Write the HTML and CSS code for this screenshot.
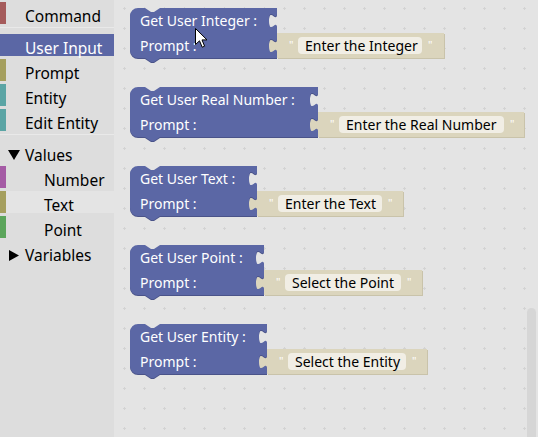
FILE: index.html
```html
<!DOCTYPE html>
<html>
<head>
<meta charset="utf-8">
<link rel="stylesheet" href="styles.css">
</head>
<body>
<div class="app">
  <div class="toolbox">
    <div class="row"><span class="bar c-command"></span><span class="label">Command</span></div>
    <div class="sep"></div>
    <div class="row selected"><span class="bar c-input"></span><span class="label">User Input</span></div>
    <div class="row"><span class="bar c-prompt"></span><span class="label">Prompt</span></div>
    <div class="row"><span class="bar c-entity"></span><span class="label">Entity</span></div>
    <div class="row"><span class="bar c-entity"></span><span class="label">Edit Entity</span></div>
    <div class="sep"></div>
    <div class="row"><svg class="tri" width="12" height="10" viewBox="0 0 12 10"><polygon points="0,0 12,0 6,10" fill="#000"/></svg><span class="label nested">Values</span></div>
    <div class="row sub"><span class="bar c-number"></span><span class="label">Number</span></div>
    <div class="row sub hover"><span class="bar c-text"></span><span class="label">Text</span></div>
    <div class="row sub"><span class="bar c-point"></span><span class="label">Point</span></div>
    <div class="row"><svg class="tri" width="12" height="11" viewBox="0 0 12 11"><polygon points="1,0 11,5.5 1,11" fill="#000"/></svg><span class="label nested">Variables</span></div>
  </div>
  <div class="workspace">
    <svg class="canvas" width="424" height="437" viewBox="0 0 424 437">
      <defs>
        <pattern id="grid" width="20" height="20" patternUnits="userSpaceOnUse">
          <rect x="9" y="8" width="3" height="1" fill="#d3d3d3"/>
          <rect x="10" y="7" width="1" height="3" fill="#d3d3d3"/>
        </pattern>
      </defs>
      <rect width="424" height="437" fill="url(#grid)"/>

      <!-- Block 1 -->
      <g transform="translate(16,8)">
        <g transform="translate(147,25)">
          <path class="str-dark" transform="translate(1,1)" d="M0,0 H167 V25 H0 V20 c0,-10 -8,8 -8,-7.5 s8,2.5 8,-7.5 Z"/>
          <path class="str" d="M0,0 H167 V25 H0 V20 c0,-10 -8,8 -8,-7.5 s8,2.5 8,-7.5 Z"/>
          <text class="quote" x="12" y="16">"</text>
          <rect class="field" x="21" y="4" width="124" height="17" rx="4"/>
          <text class="ftext" x="28" y="18">Enter the Integer</text>
          <text class="quote" x="151" y="16">"</text>
        </g>
        <path class="blk-dark" transform="translate(0,1)" d="M0,8 A8,8 0 0 1 8,0 H15 l6,4 3,0 6,-4 H147 v5 c0,10 -8,-8 -8,7.5 s8,-2.5 8,7.5 V30 c0,10 -8,-8 -8,7.5 s8,-2.5 8,7.5 V50 H30 l-6,4 -3,0 -6,-4 H8 A8,8 0 0 1 0,42 Z"/>
        <path class="blk" d="M0,8 A8,8 0 0 1 8,0 H15 l6,4 3,0 6,-4 H147 v5 c0,10 -8,-8 -8,7.5 s8,-2.5 8,7.5 V30 c0,10 -8,-8 -8,7.5 s8,-2.5 8,7.5 V50 H30 l-6,4 -3,0 -6,-4 H8 A8,8 0 0 1 0,42 Z"/>
        <text class="btext" x="10" y="18">Get User Integer :</text>
        <text class="btext" x="10" y="43">Prompt :</text>
      </g>

      <!-- Block 2 -->
      <g transform="translate(16,87)">
        <g transform="translate(188,25)">
          <path class="str-dark" transform="translate(1,1)" d="M0,0 H206 V25 H0 V20 c0,-10 -8,8 -8,-7.5 s8,2.5 8,-7.5 Z"/>
          <path class="str" d="M0,0 H206 V25 H0 V20 c0,-10 -8,8 -8,-7.5 s8,2.5 8,-7.5 Z"/>
          <text class="quote" x="12" y="16">"</text>
          <rect class="field" x="21" y="4" width="165" height="17" rx="4"/>
          <text class="ftext" x="28" y="18">Enter the Real Number</text>
          <text class="quote" x="192" y="16">"</text>
        </g>
        <path class="blk-dark" transform="translate(0,1)" d="M0,8 A8,8 0 0 1 8,0 H15 l6,4 3,0 6,-4 H188 v5 c0,10 -8,-8 -8,7.5 s8,-2.5 8,7.5 V30 c0,10 -8,-8 -8,7.5 s8,-2.5 8,7.5 V50 H30 l-6,4 -3,0 -6,-4 H8 A8,8 0 0 1 0,42 Z"/>
        <path class="blk" d="M0,8 A8,8 0 0 1 8,0 H15 l6,4 3,0 6,-4 H188 v5 c0,10 -8,-8 -8,7.5 s8,-2.5 8,7.5 V30 c0,10 -8,-8 -8,7.5 s8,-2.5 8,7.5 V50 H30 l-6,4 -3,0 -6,-4 H8 A8,8 0 0 1 0,42 Z"/>
        <text class="btext" x="10" y="18">Get User Real Number :</text>
        <text class="btext" x="10" y="43">Prompt :</text>
      </g>

      <!-- Block 3 -->
      <g transform="translate(16,166)">
        <g transform="translate(127,25)">
          <path class="str-dark" transform="translate(1,1)" d="M0,0 H146 V25 H0 V20 c0,-10 -8,8 -8,-7.5 s8,2.5 8,-7.5 Z"/>
          <path class="str" d="M0,0 H146 V25 H0 V20 c0,-10 -8,8 -8,-7.5 s8,2.5 8,-7.5 Z"/>
          <text class="quote" x="12" y="16">"</text>
          <rect class="field" x="21" y="4" width="104" height="17" rx="4"/>
          <text class="ftext" x="28" y="18">Enter the Text</text>
          <text class="quote" x="131" y="16">"</text>
        </g>
        <path class="blk-dark" transform="translate(0,1)" d="M0,8 A8,8 0 0 1 8,0 H15 l6,4 3,0 6,-4 H127 v5 c0,10 -8,-8 -8,7.5 s8,-2.5 8,7.5 V30 c0,10 -8,-8 -8,7.5 s8,-2.5 8,7.5 V50 H30 l-6,4 -3,0 -6,-4 H8 A8,8 0 0 1 0,42 Z"/>
        <path class="blk" d="M0,8 A8,8 0 0 1 8,0 H15 l6,4 3,0 6,-4 H127 v5 c0,10 -8,-8 -8,7.5 s8,-2.5 8,7.5 V30 c0,10 -8,-8 -8,7.5 s8,-2.5 8,7.5 V50 H30 l-6,4 -3,0 -6,-4 H8 A8,8 0 0 1 0,42 Z"/>
        <text class="btext" x="10" y="18">Get User Text :</text>
        <text class="btext" x="10" y="43">Prompt :</text>
      </g>

      <!-- Block 4 -->
      <g transform="translate(16,245)">
        <g transform="translate(134,25)">
          <path class="str-dark" transform="translate(1,1)" d="M0,0 H158 V25 H0 V20 c0,-10 -8,8 -8,-7.5 s8,2.5 8,-7.5 Z"/>
          <path class="str" d="M0,0 H158 V25 H0 V20 c0,-10 -8,8 -8,-7.5 s8,2.5 8,-7.5 Z"/>
          <text class="quote" x="12" y="16">"</text>
          <rect class="field" x="21" y="4" width="116" height="17" rx="4"/>
          <text class="ftext" x="28" y="18">Select the Point</text>
          <text class="quote" x="143" y="16">"</text>
        </g>
        <path class="blk-dark" transform="translate(0,1)" d="M0,8 A8,8 0 0 1 8,0 H15 l6,4 3,0 6,-4 H134 v5 c0,10 -8,-8 -8,7.5 s8,-2.5 8,7.5 V30 c0,10 -8,-8 -8,7.5 s8,-2.5 8,7.5 V50 H30 l-6,4 -3,0 -6,-4 H8 A8,8 0 0 1 0,42 Z"/>
        <path class="blk" d="M0,8 A8,8 0 0 1 8,0 H15 l6,4 3,0 6,-4 H134 v5 c0,10 -8,-8 -8,7.5 s8,-2.5 8,7.5 V30 c0,10 -8,-8 -8,7.5 s8,-2.5 8,7.5 V50 H30 l-6,4 -3,0 -6,-4 H8 A8,8 0 0 1 0,42 Z"/>
        <text class="btext" x="10" y="18">Get User Point :</text>
        <text class="btext" x="10" y="43">Prompt :</text>
      </g>

      <!-- Block 5 -->
      <g transform="translate(16,324)">
        <g transform="translate(137,25)">
          <path class="str-dark" transform="translate(1,1)" d="M0,0 H160 V25 H0 V20 c0,-10 -8,8 -8,-7.5 s8,2.5 8,-7.5 Z"/>
          <path class="str" d="M0,0 H160 V25 H0 V20 c0,-10 -8,8 -8,-7.5 s8,2.5 8,-7.5 Z"/>
          <text class="quote" x="12" y="16">"</text>
          <rect class="field" x="21" y="4" width="118" height="17" rx="4"/>
          <text class="ftext" x="28" y="18">Select the Entity</text>
          <text class="quote" x="145" y="16">"</text>
        </g>
        <path class="blk-dark" transform="translate(0,1)" d="M0,8 A8,8 0 0 1 8,0 H15 l6,4 3,0 6,-4 H137 v5 c0,10 -8,-8 -8,7.5 s8,-2.5 8,7.5 V30 c0,10 -8,-8 -8,7.5 s8,-2.5 8,7.5 V50 H30 l-6,4 -3,0 -6,-4 H8 A8,8 0 0 1 0,42 Z"/>
        <path class="blk" d="M0,8 A8,8 0 0 1 8,0 H15 l6,4 3,0 6,-4 H137 v5 c0,10 -8,-8 -8,7.5 s8,-2.5 8,7.5 V30 c0,10 -8,-8 -8,7.5 s8,-2.5 8,7.5 V50 H30 l-6,4 -3,0 -6,-4 H8 A8,8 0 0 1 0,42 Z"/>
        <text class="btext" x="10" y="18">Get User Entity :</text>
        <text class="btext" x="10" y="43">Prompt :</text>
      </g>

      <rect class="scroll" x="413" y="308" width="9" height="140" rx="4.5"/>
    </svg>
  </div>
  <svg class="cursor" width="13" height="21" viewBox="0 0 13 21">
    <path d="M0.5,0.5 L0.5,16.5 L4.5,12.8 L7.2,19.2 L9.6,18.2 L7,11.9 L12,11.9 Z" fill="#fff" stroke="#000" stroke-width="1" stroke-linejoin="round"/>
  </svg>
</div>
</body>
</html>
```
FILE: styles.css
```css
html, body {
  margin: 0;
  padding: 0;
}
body {
  font-family: "Noto Sans", "Open Sans", sans-serif;
  background: #e4e4e4;
}
.app {
  position: relative;
  display: flex;
  width: 538px;
  height: 437px;
  overflow: hidden;
}
.toolbox {
  flex: none;
  width: 114px;
  background: #dddddd;
  padding-top: 2px;
  box-sizing: border-box;
}
.row {
  display: flex;
  align-items: flex-start;
  height: 22px;
  margin-bottom: 3px;
  font-size: 15.5px;
  color: #000;
  white-space: nowrap;
}
.row.selected {
  background: #5b67a5;
  color: #fff;
}
.row.hover {
  background: #e4e4e4;
}
.bar {
  flex: none;
  width: 6px;
  height: 22px;
}
.c-command { background: #a55b5b; }
.c-input { background: #5b67a5; }
.c-prompt { background: #a59f5e; }
.c-entity { background: #5ba5a5; }
.c-number { background: #a55ba5; }
.c-text { background: #a59f5e; }
.c-point { background: #5ba55b; }
.label {
  padding-left: 19px;
  line-height: 22px;
  padding-top: 3px;
}
.sub .label {
  padding-left: 38px;
}
.tri {
  flex: none;
  margin-left: 8px;
  margin-top: 9px;
  display: block;
}
.label.nested {
  padding-left: 5px;
}
.sep {
  height: 0;
  border-bottom: 1px solid #e9e9e9;
  margin: 1px 0 6px;
}
.workspace {
  flex: 1;
  background: #e4e4e4;
}
.canvas {
  display: block;
}
.blk {
  fill: #5b67a5;
}
.blk-dark {
  fill: #4a5389;
}
.str {
  fill: #dbd5bd;
}
.str-dark {
  fill: #c9c3aa;
}
.field {
  fill: #ffffff;
  fill-opacity: 0.6;
}
.btext {
  fill: #ffffff;
  font-size: 14px;
  font-family: "Noto Sans", "Open Sans", sans-serif;
}
.ftext {
  fill: #000000;
  font-size: 14px;
  font-family: "Noto Sans", "Open Sans", sans-serif;
}
.quote {
  fill: #ffffff;
  font-size: 11px;
  font-family: "Noto Sans", sans-serif;
}
.scroll {
  fill: #d6d6d6;
}
.cursor {
  position: absolute;
  left: 195px;
  top: 28px;
}
```
